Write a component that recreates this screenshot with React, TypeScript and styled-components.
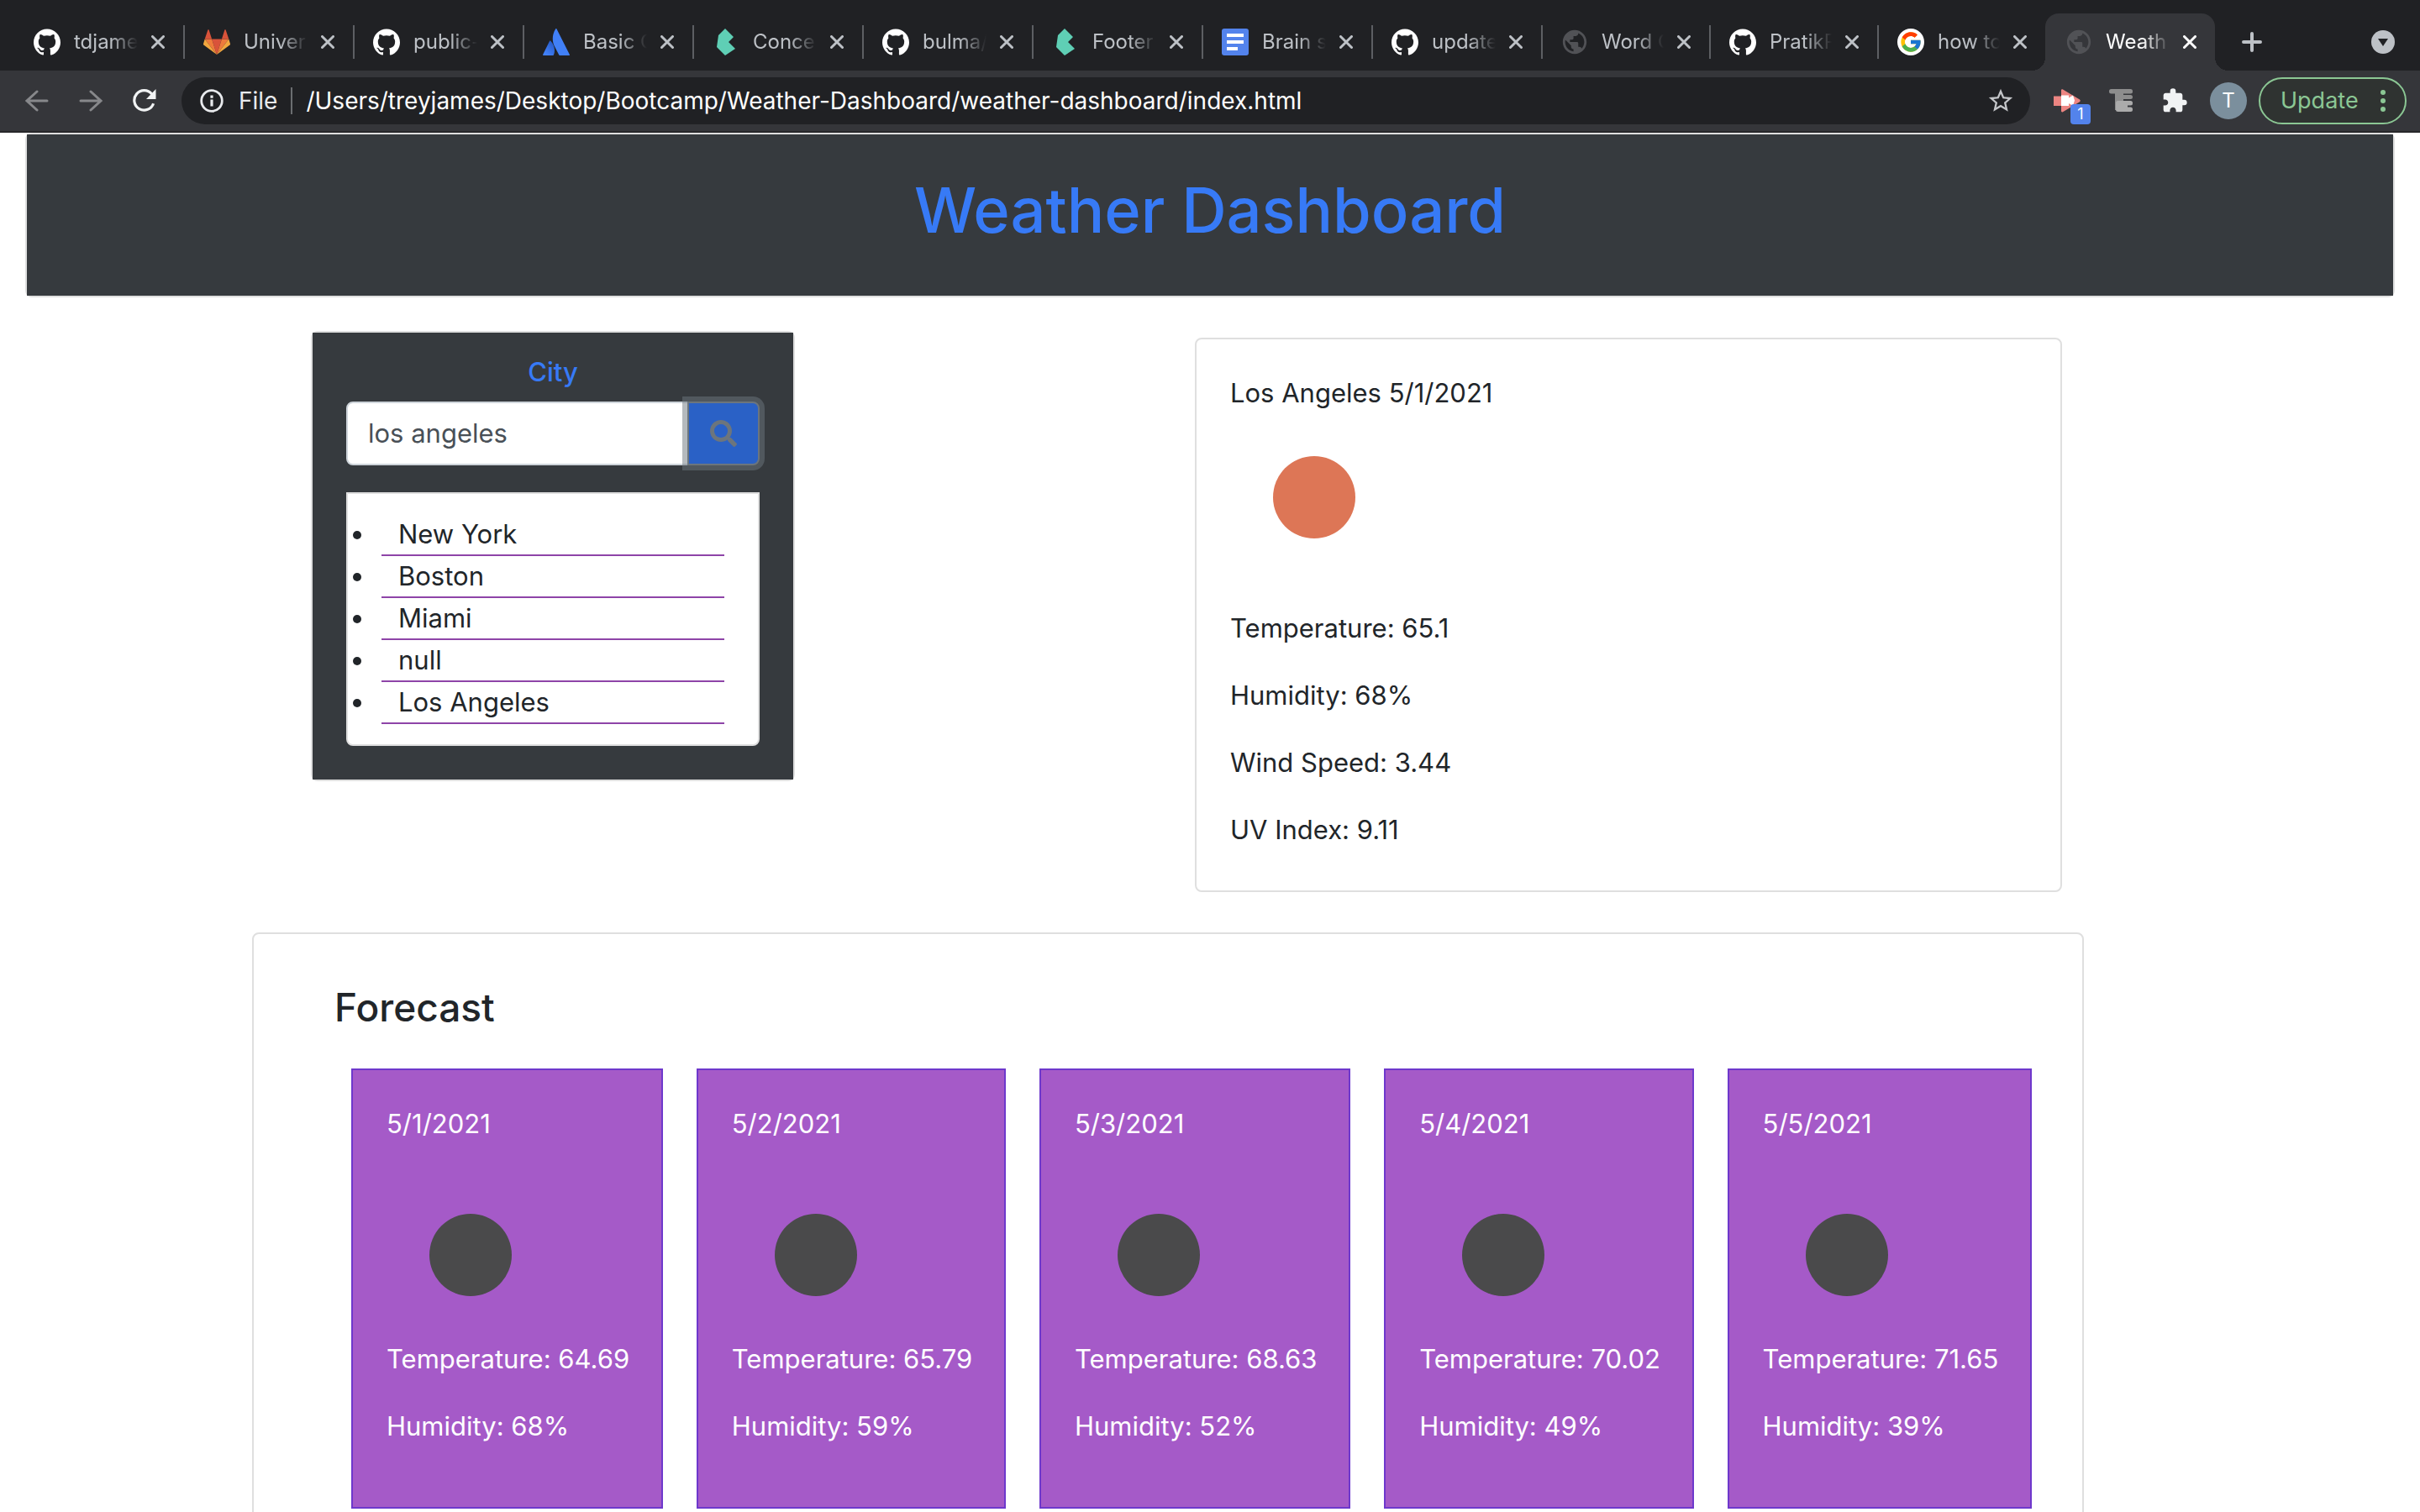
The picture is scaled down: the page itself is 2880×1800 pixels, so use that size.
import React, { useState } from "react";
import styled, { createGlobalStyle, css } from "styled-components";
import { SiGithub, SiBulma } from "react-icons/si";
import { FcGoogle } from "react-icons/fc";
import { FaSearch } from "react-icons/fa";
import { MdPublic, MdExtension, MdStarBorder } from "react-icons/md";

const GlobalStyle = createGlobalStyle`
  *, *::before, *::after { box-sizing: border-box; }
  body { margin: 0; background: #fff; }
  body, button, input {
    font-family: Inter, "Liberation Sans", sans-serif;
    font-size: 31px;
    line-height: 48px;
    color: #212529;
  }
  button { border: 0; padding: 0; background: none; cursor: pointer; }
  h1, h2, p, ul { margin: 0; }
`;

const Window = styled.div`
  display: flex;
  flex-direction: column;
  height: 100vh;
  overflow: hidden;
`;

/* ---------- tab strip ---------- */

const TabStrip = styled.div`
  display: flex;
  align-items: stretch;
  height: 84px;
  padding: 16px 30px 0 16px;
  background: #202124;
`;

const TabList = styled.ul`
  display: flex;
  padding: 0;
  list-style: none;
`;

const TabItem = styled.li<{ $active?: boolean; $narrow?: boolean }>`
  position: relative;
  display: flex;
  align-items: center;
  width: ${(p) => (p.$narrow ? 200 : 202)}px;
  min-width: 0;
  color: #bdc1c6;
  ${(p) =>
    p.$active &&
    css`
      background: #35363a;
      border-radius: 16px 16px 0 0;
      color: #fff;
      &::before,
      &::after {
        content: "";
        position: absolute;
        bottom: 0;
        width: 16px;
        height: 16px;
      }
      &::before {
        right: 100%;
        background: radial-gradient(circle at 0 0, transparent 16px, #35363a 16px);
      }
      &::after {
        left: 100%;
        background: radial-gradient(circle at 100% 0, transparent 16px, #35363a 16px);
      }
    `}
`;

const TabInner = styled.div<{ $divider: boolean }>`
  display: flex;
  align-items: center;
  gap: 16px;
  width: 100%;
  height: 40px;
  padding: 0 22px;
  border-left: 2px solid ${(p) => (p.$divider ? "#5d5f63" : "transparent")};
`;

const TabButton = styled.button`
  display: flex;
  align-items: center;
  gap: 16px;
  flex: 1;
  min-width: 0;
  color: inherit;
`;

const Favicon = styled.span`
  display: flex;
  align-items: center;
  justify-content: center;
  flex: none;
  width: 32px;
  height: 32px;
  color: #fff;
  svg { flex: none; }
`;

const GoogleDisc = styled(Favicon)`
  border-radius: 50%;
  background: #fff;
`;

const TabTitle = styled.span`
  flex: 1;
  min-width: 0;
  overflow: hidden;
  white-space: nowrap;
  text-align: left;
  font-size: 24px;
  line-height: 36px;
  mask-image: linear-gradient(to right, #000 calc(100% - 32px), transparent);
`;

const IconButton = styled.button`
  display: flex;
  align-items: center;
  justify-content: center;
  flex: none;
  color: inherit;
  svg { display: block; }
`;

const NewTabButton = styled(IconButton)`
  margin-left: 32px;
  color: #bdc1c6;
`;

const TabSearchButton = styled(IconButton)`
  margin-left: auto;
  color: #bdc1c6;
`;

/* ---------- toolbar ---------- */

const Toolbar = styled.div`
  display: flex;
  align-items: center;
  height: 74px;
  padding: 0 16px 0 30px;
  border-bottom: 2px solid #27272a;
  background: #35363a;
`;

const NavButtons = styled.div`
  display: flex;
  align-items: center;
  gap: 36px;
  margin-right: 30px;
  color: #87888b;
`;

const ReloadButton = styled(IconButton)`
  color: #f1f3f4;
`;

const Omnibox = styled.div`
  display: flex;
  align-items: center;
  flex: 1;
  height: 56px;
  padding: 0 18px 0 22px;
  border-radius: 28px;
  background: #202124;
  color: #e8eaed;
`;

const SchemeLabel = styled.label`
  margin-left: 18px;
  padding-right: 16px;
  border-right: 2px solid #6b6d70;
  font-size: 28px;
  line-height: 32px;
`;

const UrlInput = styled.input`
  flex: 1;
  min-width: 0;
  border: 0;
  padding: 0 0 0 16px;
  outline: 0;
  background: transparent;
  font-size: 28px;
  line-height: 40px;
  color: #fff;
`;

const Extensions = styled.div`
  display: flex;
  align-items: center;
  gap: 34px;
  margin: 0 26px 0 28px;
`;

const BadgeHost = styled(IconButton)`
  position: relative;
`;

const Badge = styled.span`
  position: absolute;
  left: 20px;
  top: 18px;
  width: 24px;
  height: 24px;
  border-radius: 4px;
  background: #5383ec;
  font-size: 18px;
  line-height: 24px;
  color: #fff;
`;

const Avatar = styled.button`
  width: 44px;
  height: 44px;
  border-radius: 50%;
  background: #7b8f9d;
  font-size: 24px;
  line-height: 44px;
  color: #fff;
`;

const UpdateButton = styled.button`
  display: flex;
  align-items: center;
  justify-content: space-between;
  width: 176px;
  height: 56px;
  margin-left: 14px;
  padding: 0 23px 0 24px;
  border: 2px solid #8bc794;
  border-radius: 28px;
  background: #2f3331;
  font-size: 27px;
  color: #8bc794;
`;

/* ---------- page ---------- */

const Viewport = styled.div`
  flex: 1;
  min-height: 0;
  overflow: hidden;
`;

const cardFrame = css`
  border: 2px solid #dfdfdf;
  border-radius: 8px;
  background: #fff;
`;

const PageHeader = styled.header`
  ${cardFrame}
  margin: 0 30px;
`;

const PageTitle = styled.h1`
  padding: 42px 40px 54px;
  background: #363a3e;
  font-size: 74px;
  line-height: 96px;
  font-weight: 500;
  text-align: center;
  color: #377af6;
`;

const Container = styled.main`
  max-width: 2280px;
  margin: 0 auto;
`;

const TopRow = styled.div`
  display: flex;
  align-items: flex-start;
  justify-content: space-between;
  gap: 40px;
  padding: 0 126px 0 70px;
`;

const CityCard = styled.section`
  ${cardFrame}
  flex: 0 1 576px;
  min-width: 0;
  margin-top: 40px;
`;

const CityBody = styled.div`
  padding: 28px 40px 40px;
  background: #363a3e;
`;

const CityLabel = styled.label`
  display: block;
  margin-bottom: 16px;
  font-weight: 500;
  line-height: 38px;
  text-align: center;
  color: #377af6;
`;

const SearchForm = styled.form`
  display: flex;
  height: 76px;
  margin-bottom: 32px;
`;

const SearchInput = styled.input`
  flex: 1;
  min-width: 0;
  padding: 12px 24px;
  border: 2px solid #ced4da;
  border-radius: 8px 0 0 8px;
  outline: 0;
  background: #fff;
  color: #495057;
`;

const SearchButton = styled.button`
  display: flex;
  align-items: center;
  justify-content: center;
  width: 86px;
  margin-left: -2px;
  border: 2px solid #6c757d;
  border-radius: 0 8px 8px 0;
  background: #2a61c6;
  box-shadow: 0 0 0 6px rgba(108, 117, 125, 0.5);
  color: #6c757d;
`;

const HistoryList = styled.ul`
  ${cardFrame}
  padding: 24px 40px 24px 33px;
  border-radius: 0 0 8px 8px;
`;

const HistoryName = styled.span`
  display: block;
  margin-left: 7px;
  padding-left: 20px;
  border-bottom: 2px solid #8e44a8;
`;

const CurrentCard = styled.section`
  ${cardFrame}
  flex: 0 1 1032px;
  margin-top: 48px;
  padding: 40px 40px 48px;
`;

const Readings = styled.div`
  display: flex;
  flex-direction: column;
  gap: 32px;
`;

const WeatherImage = styled.div<{ $tone: string }>`
  display: flex;
  align-items: center;
  justify-content: center;
  width: 200px;
  height: 200px;
  &::before {
    content: "";
    width: 98px;
    height: 98px;
    border-radius: 50%;
    background: ${(p) => p.$tone};
  }
`;

const ForecastCard = styled.section`
  ${cardFrame}
  max-width: 2180px;
  margin-top: 48px;
  padding: 58px 60px 40px 96px;
`;

const ForecastTitle = styled.h2`
  margin-bottom: 44px;
  font-size: 46px;
  line-height: 58px;
  font-weight: 500;
`;

const DayRow = styled.div`
  display: flex;
  gap: 40px;
  padding-left: 20px;
`;

const DayCard = styled.article`
  flex: 1 1 auto;
  min-width: 0;
  padding: 40px;
  border: 2px solid #6e38cc;
  background: #a55ac8;
  white-space: nowrap;
  color: #fff;
  p { margin-bottom: 32px; }
`;

/* ---------- drawings ---------- */

const GitlabLogo = () => (
  <svg width="32" height="32" viewBox="0 0 32 32" aria-hidden="true">
    <path d="M16 31 21.900 12.500H10.100z" fill="#d9533a" />
    <path d="M16 31 10.100 12.500H1.700z" fill="#ee7b3c" />
    <path d="M1.700 12.500 0 18.200a1.100 1.100 0 0 0 .4 1.300L16 31z" fill="#f2a73f" />
    <path d="M1.700 12.500h8.400L6.600 1.600c-.2-.6-1-.6-1.200 0z" fill="#d9533a" />
    <path d="M16 31 21.900 12.500h8.400z" fill="#ee7b3c" />
    <path d="M30.300 12.500 32 18.200a1.100 1.100 0 0 1-.4 1.300L16 31z" fill="#f2a73f" />
    <path d="M30.300 12.500h-8.400l3.500-10.900c.2-.6 1-.6 1.200 0z" fill="#d9533a" />
  </svg>
);

const AtlassianLogo = () => (
  <svg width="32" height="32" viewBox="0 0 32 32" aria-hidden="true">
    <defs>
      <linearGradient id="atlassian" x1="0.9" y1="0.1" x2="0.3" y2="0.9">
        <stop offset="0" stopColor="#2559c8" />
        <stop offset="1" stopColor="#4180f7" />
      </linearGradient>
    </defs>
    <path d="M9.300 14.800c-.4-.5-1-.5-1.300.1L.1 31c-.2.500.1 1 .6 1h11.400c.4 0 .7-.2.800-.500 2.300-4.900.900-12.300-3.600-16.700z" fill="url(#atlassian)" />
    <path d="M15.200.4c-4.500 7.100-4.200 15-1.200 20.900l5.300 10.200c.2.300.5.500.8.500h11.200c.6 0 .9-.5.6-1L16.500.4c-.3-.5-1-.5-1.300 0z" fill="#4180f7" />
  </svg>
);

const DocsLogo = () => (
  <svg width="32" height="32" viewBox="0 0 32 32" aria-hidden="true">
    <rect width="32" height="32" rx="3" fill="#5383ec" />
    <path d="M6 6h20v4H6zM6 14h20v4H6zM6 22h13v4H6z" fill="#fff" />
  </svg>
);

const CloseIcon = () => (
  <svg width="16" height="16" viewBox="0 0 16 16" fill="none" stroke="currentColor" strokeWidth="3" strokeLinecap="round" aria-hidden="true">
    <path d="m1.500 1.500 13 13M14.500 1.500l-13 13" />
  </svg>
);

const PlusIcon = () => (
  <svg width="24" height="24" viewBox="0 0 24 24" fill="none" stroke="currentColor" strokeWidth="4" strokeLinecap="round" aria-hidden="true">
    <path d="M12 2v20M2 12h20" />
  </svg>
);

const TabSearchIcon = () => (
  <svg width="28" height="28" viewBox="0 0 28 28" aria-hidden="true">
    <circle cx="14" cy="14" r="14" fill="currentColor" />
    <path d="M8 10h12l-6 9z" fill="#202124" />
  </svg>
);

const ArrowIcon = ({ forward }: { forward?: boolean }) => (
  <svg width="28" height="28" viewBox="0 0 28 28" fill="none" stroke="currentColor" strokeWidth="3" strokeLinecap="round" aria-hidden="true">
    <path d={forward ? "M2 14h24M14 3l12 11-12 11" : "M26 14H2M14 3 2 14l12 11"} />
  </svg>
);

const ReloadIcon = () => (
  <svg width="28" height="28" viewBox="0 0 28 28" fill="none" aria-hidden="true">
    <path d="M24.600 17.200A11.700 11.700 0 1 1 22.600 6" stroke="currentColor" strokeWidth="3.200" />
    <path d="M27.500 0v12H16z" fill="currentColor" />
  </svg>
);

const InfoIcon = () => (
  <svg width="28" height="28" viewBox="0 0 28 28" fill="none" aria-hidden="true">
    <circle cx="14" cy="14" r="12.300" stroke="currentColor" strokeWidth="2.800" />
    <path d="M12.400 12.500h3.200v8h-3.200zM12.400 7.500h3.200v3.200h-3.200z" fill="currentColor" />
  </svg>
);

const CameraExtensionIcon = () => (
  <svg width="32" height="28" viewBox="0 0 32 28" aria-hidden="true">
    <path d="M0 8.500h9V20H0zM9 1.500c0-1 1-1.500 2-1l20 12c1 .8 1 2 0 2.700l-20 12c-1 .5-2 0-2-1z" fill="#ec8582" />
    <path d="M9 7.500h9v3l5-3 2 6-2 6.500-5-3V20H9z" fill="#fff" />
  </svg>
);

const TreeExtensionIcon = () => (
  <svg width="28" height="28" viewBox="0 0 28 28" aria-hidden="true">
    <g fill="#8d8d8d">
      <rect width="28" height="5.500" rx="2.500" />
      <rect x="7" y="3" width="10" height="22" />
      <rect x="7" y="7" width="21" height="5" rx="2.500" />
    </g>
    <g fill="#ababab">
      <rect x="8" y="14" width="20" height="5.500" rx="2.500" />
      <rect x="8" y="18" width="14" height="5" />
      <rect x="8" y="21.500" width="20" height="5.500" rx="2.500" />
    </g>
  </svg>
);

const DotsIcon = () => (
  <svg width="6" height="26" viewBox="0 0 6 26" fill="currentColor" aria-hidden="true">
    <circle cx="3" cy="3" r="3" />
    <circle cx="3" cy="13" r="3" />
    <circle cx="3" cy="23" r="3" />
  </svg>
);

type IconName = "github" | "gitlab" | "atlassian" | "bulma" | "docs" | "globe" | "google";

const SiteIcon = ({ name }: { name: IconName }) => {
  if (name === "google") {
    return (
      <GoogleDisc>
        <FcGoogle size={28} />
      </GoogleDisc>
    );
  }
  return (
    <Favicon>
      {name === "github" && <SiGithub size={32} />}
      {name === "gitlab" && <GitlabLogo />}
      {name === "atlassian" && <AtlassianLogo />}
      {name === "bulma" && <SiBulma size={32} color="#5fcfb5" />}
      {name === "docs" && <DocsLogo />}
      {name === "globe" && <MdPublic size={34} color="#515256" />}
    </Favicon>
  );
};

/* ---------- data ---------- */

const tabs: { icon: IconName; title: string; narrow?: boolean; active?: boolean }[] = [
  { icon: "github", title: "tdjame" },
  { icon: "gitlab", title: "Univers" },
  { icon: "github", title: "public-" },
  { icon: "atlassian", title: "Basic C" },
  { icon: "bulma", title: "Concep" },
  { icon: "github", title: "bulma/" },
  { icon: "bulma", title: "Footer" },
  { icon: "docs", title: "Brain s" },
  { icon: "github", title: "update" },
  { icon: "globe", title: "Word C", narrow: true },
  { icon: "github", title: "PratikP", narrow: true },
  { icon: "google", title: "how to", narrow: true },
  { icon: "globe", title: "Weath", active: true },
];

const cities = ["New York", "Boston", "Miami", "null", "Los Angeles"];

const days = [
  { date: "5/1/2021", temperature: "64.69", humidity: 68 },
  { date: "5/2/2021", temperature: "65.79", humidity: 59 },
  { date: "5/3/2021", temperature: "68.63", humidity: 52 },
  { date: "5/4/2021", temperature: "70.02", humidity: 49 },
  { date: "5/5/2021", temperature: "71.65", humidity: 39 },
];

export default function App() {
  const [query, setQuery] = useState("los angeles");
  const [url, setUrl] = useState(
    "/Users/treyjames/Desktop/Bootcamp/Weather-Dashboard/weather-dashboard/index.html"
  );

  return (
    <Window>
      <GlobalStyle />
      <TabStrip>
        <TabList>
          {tabs.map((tab, i) => (
            <TabItem key={i} $active={tab.active} $narrow={tab.narrow}>
              <TabInner $divider={i > 0 && !tab.active}>
                <TabButton type="button">
                  <SiteIcon name={tab.icon} />
                  <TabTitle>{tab.title}</TabTitle>
                </TabButton>
                <IconButton type="button" aria-label="Close tab">
                  <CloseIcon />
                </IconButton>
              </TabInner>
            </TabItem>
          ))}
        </TabList>
        <NewTabButton type="button" aria-label="New tab">
          <PlusIcon />
        </NewTabButton>
        <TabSearchButton type="button" aria-label="Search tabs">
          <TabSearchIcon />
        </TabSearchButton>
      </TabStrip>

      <Toolbar>
        <NavButtons>
          <IconButton type="button" aria-label="Back">
            <ArrowIcon />
          </IconButton>
          <IconButton type="button" aria-label="Forward">
            <ArrowIcon forward />
          </IconButton>
          <ReloadButton type="button" aria-label="Reload">
            <ReloadIcon />
          </ReloadButton>
        </NavButtons>
        <Omnibox>
          <InfoIcon />
          <SchemeLabel htmlFor="address">File</SchemeLabel>
          <UrlInput id="address" value={url} onChange={(e) => setUrl(e.target.value)} />
          <IconButton type="button" aria-label="Bookmark">
            <MdStarBorder size={34} color="#c4c6c9" />
          </IconButton>
        </Omnibox>
        <Extensions>
          <BadgeHost type="button" aria-label="Recorder extension">
            <CameraExtensionIcon />
            <Badge>1</Badge>
          </BadgeHost>
          <IconButton type="button" aria-label="Tree extension">
            <TreeExtensionIcon />
          </IconButton>
          <IconButton type="button" aria-label="Extensions">
            <MdExtension size={32} color="#f1f3f4" />
          </IconButton>
        </Extensions>
        <Avatar type="button">T</Avatar>
        <UpdateButton type="button">
          Update
          <DotsIcon />
        </UpdateButton>
      </Toolbar>

      <Viewport>
        <PageHeader>
          <PageTitle>Weather Dashboard</PageTitle>
        </PageHeader>
        <Container>
          <TopRow>
            <CityCard>
              <CityBody>
                <CityLabel htmlFor="city">City</CityLabel>
                <SearchForm onSubmit={(e) => e.preventDefault()}>
                  <SearchInput id="city" value={query} onChange={(e) => setQuery(e.target.value)} />
                  <SearchButton type="submit" aria-label="Search">
                    <FaSearch size={32} />
                  </SearchButton>
                </SearchForm>
                <HistoryList>
                  {cities.map((city) => (
                    <li key={city}>
                      <HistoryName>{city}</HistoryName>
                    </li>
                  ))}
                </HistoryList>
              </CityBody>
            </CityCard>
            <CurrentCard>
              <p>Los Angeles 5/1/2021</p>
              <Readings>
                <WeatherImage $tone="#dd7656" role="img" aria-label="Clear sky" />
                <p>Temperature: 65.1</p>
                <p>Humidity: 68%</p>
                <p>Wind Speed: 3.44</p>
                <p>UV Index: 9.11</p>
              </Readings>
            </CurrentCard>
          </TopRow>
          <ForecastCard>
            <ForecastTitle>Forecast</ForecastTitle>
            <DayRow>
              {days.map((day) => (
                <DayCard key={day.date}>
                  <p>{day.date}</p>
                  <WeatherImage $tone="#4a4a4b" role="img" aria-label="Clear night" />
                  <p>Temperature: {day.temperature}</p>
                  <p>Humidity: {day.humidity}%</p>
                </DayCard>
              ))}
            </DayRow>
          </ForecastCard>
        </Container>
      </Viewport>
    </Window>
  );
}
